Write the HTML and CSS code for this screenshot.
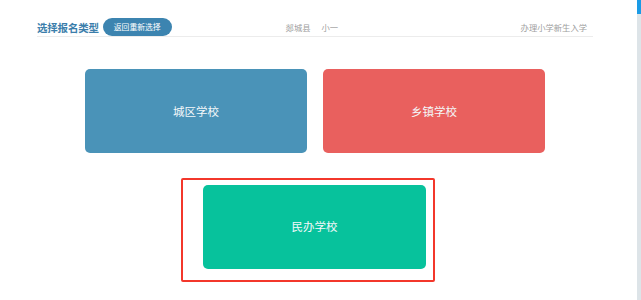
FILE: index.html
```html
<!DOCTYPE html>
<html lang="zh-CN">
<head>
  <meta charset="UTF-8">
  <title>选择报名类型</title>
  <link rel="stylesheet" href="styles.css">
</head>
<body>

  <div class="main">
    <!-- 顶部标题栏 -->
    <div class="top-bar">
      <div class="title">选择报名类型</div>
      <button class="back-btn">返回重新选择</button>
      <div class="meta">
        <span class="meta-county">郯城县</span>
        <span class="meta-grade">小一</span>
      </div>
      <div class="meta-task">办理小学新生入学</div>
    </div>

    <!-- 学校类型 -->
    <div class="type-row">
      <div class="type-card city">城区学校</div>
      <div class="type-card town">乡镇学校</div>
    </div>

    <div class="type-row second">
      <div class="mark-box">
        <div class="type-card private">民办学校</div>
      </div>
    </div>
  </div>

  <div class="side-strip">
    <div class="side-thumb"></div>
  </div>

</body>
</html>
```

FILE: styles.css
```css
html, body {
  height: 100%;
}

body {
  margin: 0;
  display: flex;
  background-color: #fff;
  font-family: "Noto Sans CJK SC", "Noto Sans", sans-serif;
  overflow: hidden;
}

.main {
  flex: 1;
  padding-left: 37px;
}

.top-bar {
  width: 556px;
  height: 18px;
  margin-top: 18px;
  display: flex;
  align-items: center;
  border-bottom: 1px solid #ececec;
}

.title {
  font-size: 10.5px;
  font-weight: bold;
  color: #3b7eab;
  letter-spacing: -0.2px;
}

.back-btn {
  margin-left: 4px;
  height: 18px;
  padding: 0 11px;
  border: none;
  border-radius: 9px;
  background-color: #3c84b0;
  color: #fff;
  font-family: inherit;
  font-size: 7.8px;
  line-height: 18px;
  cursor: pointer;
}

.meta {
  margin-left: 114px;
  display: flex;
  gap: 11px;
  font-size: 8.3px;
  color: #a0a0a0;
}

.meta-task {
  margin-left: auto;
  margin-right: 6px;
  font-size: 8.3px;
  color: #a0a0a0;
}

.type-row {
  width: 556px;
  display: flex;
  justify-content: center;
  gap: 16px;
  margin-top: 32px;
}

.type-row.second {
  justify-content: flex-start;
  padding-left: 144px;
  box-sizing: border-box;
  margin-top: 25px;
}

.type-card {
  width: 222px;
  height: 84px;
  border-radius: 5px;
  display: flex;
  align-items: center;
  justify-content: center;
  color: #f4f8fa;
  font-size: 11.5px;
  cursor: pointer;
}

.type-card.city {
  background-color: #4a93b8;
}

.type-card.town {
  background-color: #e9605e;
}

.type-card.private {
  width: 223px;
  padding-bottom: 3px;
  box-sizing: border-box;
  background-color: #07c29c;
}

.mark-box {
  border: 2px solid #f3372b;
  border-radius: 2px;
  padding: 5px 7px 11px 20px;
}

.side-strip {
  width: 4px;
  background-color: #dde4e8;
}

.side-thumb {
  height: 14px;
  background-color: #1a9be6;
}
```
